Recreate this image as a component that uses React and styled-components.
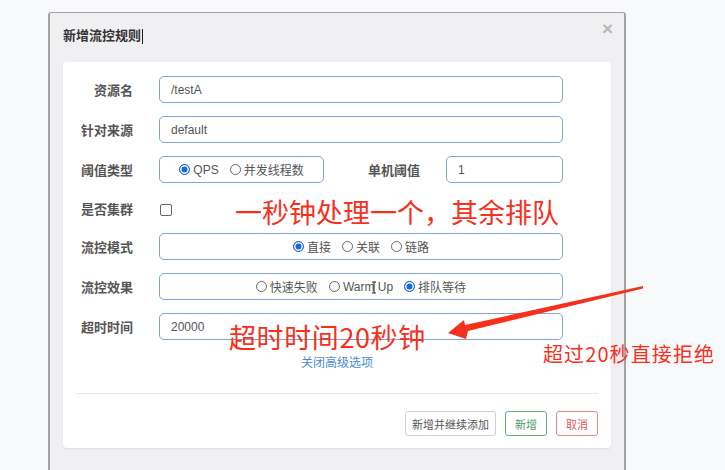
import React from "react";
import styled, { createGlobalStyle } from "styled-components";

const GlobalStyle = createGlobalStyle`
  html, body {
    margin: 0;
    padding: 0;
    background: #f8f9fb;
  }
  body {
    font-family: "Liberation Sans", "Noto Sans CJK SC", sans-serif;
  }
`;

const Page = styled.div`
  position: relative;
  width: 725px;
  height: 470px;
  overflow: hidden;
  padding-top: 12px;
  box-sizing: border-box;
`;

const Modal = styled.div`
  margin-left: 48px;
  width: 578px;
  min-height: 480px;
  box-sizing: border-box;
  background: #f0eff2;
  border: 2px solid #a3a3a3;
  border-top-width: 1px;
  border-bottom: none;
  border-radius: 3px 3px 0 0;
  padding: 0 13px;
`;

const Header = styled.div`
  display: flex;
  justify-content: space-between;
  align-items: flex-start;
  height: 49px;
  box-sizing: border-box;
  padding-top: 14px;
`;

const Title = styled.h4`
  margin: 0;
  display: flex;
  align-items: center;
  font-size: 13px;
  line-height: 18px;
  font-weight: bold;
  color: #333;
`;

const Caret = styled.span`
  display: inline-block;
  width: 1px;
  height: 15px;
  margin-left: 1px;
  background: #222;
`;

const Close = styled.span`
  margin-top: -7px;
  margin-right: -2px;
  font-size: 19px;
  line-height: 18px;
  color: #b8b8b8;
  font-weight: bold;
`;

const Card = styled.div`
  background: #fff;
  border-radius: 4px;
  box-shadow: 0 1px 2px rgba(0, 0, 0, 0.08);
  padding: 14px 13px 12px;
`;

const Form = styled.div`
  display: flex;
  flex-direction: column;
  gap: 13px;
  padding-right: 35px;
`;

const Row = styled.div`
  display: grid;
  grid-template-columns: 57px 1fr;
  column-gap: 26px;
  align-items: center;
  min-height: ${(p) => (p.$short ? "24px" : "27px")};
`;

const Label = styled.label`
  text-align: right;
  font-size: 13px;
  font-weight: bold;
  color: #555;
  white-space: nowrap;
  width: ${(p) => p.$width || "auto"};
  margin-right: ${(p) => p.$gap || "0"};
`;

const Input = styled.div`
  flex: 1;
  height: 27px;
  box-sizing: border-box;
  border: 1px solid #80a4cf;
  border-radius: 5px;
  padding: 0 11px;
  display: flex;
  align-items: center;
  font-size: 12px;
  color: #555;
`;

const Inline = styled.div`
  display: flex;
  align-items: center;
`;

const RadioBox = styled.div`
  width: ${(p) => p.$width || "auto"};
  flex: ${(p) => (p.$width ? "none" : "1")};
  height: 27px;
  box-sizing: border-box;
  border: 1px solid #80a4cf;
  border-radius: 5px;
  display: flex;
  align-items: center;
  justify-content: center;
  gap: 11px;
  font-size: 12px;
  color: #555;
`;

const Option = styled.span`
  display: inline-flex;
  align-items: center;
  gap: 3px;
  white-space: nowrap;
`;

const Dot = styled.span`
  width: 11px;
  height: 11px;
  box-sizing: border-box;
  border-radius: 50%;
  border: 1px solid ${(p) => (p.$on ? "#1668dc" : "#666")};
  background: ${(p) => (p.$on ? "#1668dc" : "#fff")};
  box-shadow: ${(p) => (p.$on ? "inset 0 0 0 1.5px #fff" : "none")};
`;

const Check = styled.span`
  width: 10px;
  height: 10px;
  border: 1px solid #666;
  border-radius: 2px;
  background: #fff;
  margin-left: 1px;
  margin-top: 3px;
`;

const LinkRow = styled.div`
  text-align: center;
  margin-top: 16px;
  font-size: 12px;
  line-height: 14px;
  color: #4c8bd4;
`;

const Divider = styled.div`
  height: 1px;
  background: #e7e7e7;
  margin-top: 23px;
`;

const Footer = styled.div`
  display: flex;
  justify-content: flex-end;
  gap: 9px;
  margin-top: 17px;
`;

const tones = {
  plain: { border: "#d0d0d0", color: "#555" },
  ok: { border: "#6cb07e", color: "#4e9a5f" },
  cancel: { border: "#e28a8a", color: "#d6595b" },
};

const Button = styled.button`
  height: 25px;
  min-width: 42px;
  padding: 0 6px;
  font-family: "Liberation Sans", "Noto Sans CJK SC", sans-serif;
  font-size: 11px;
  background: #fff;
  border: 1px solid ${(p) => tones[p.$tone].border};
  color: ${(p) => tones[p.$tone].color};
  border-radius: 3px;
`;

const Note = styled.div`
  position: absolute;
  left: ${(p) => p.$x}px;
  top: ${(p) => p.$y}px;
  font-family: "Noto Sans CJK SC", sans-serif;
  font-size: ${(p) => p.$size}px;
  letter-spacing: ${(p) => p.$track || 0}px;
  line-height: 1;
  color: #f5301c;
  white-space: nowrap;
`;

const Overlay = styled.svg`
  position: absolute;
  left: 0;
  top: 0;
  pointer-events: none;
`;

const Radios = ({ items, width }) => (
  <RadioBox $width={width}>
    {items.map(([text, on]) => (
      <Option key={text}>
        <Dot $on={on} />
        {text}
      </Option>
    ))}
  </RadioBox>
);

export default function App() {
  return (
    <Page>
      <GlobalStyle />
      <Modal>
        <Header>
          <Title>
            新增流控规则
            <Caret />
          </Title>
          <Close>×</Close>
        </Header>
        <Card>
          <Form>
            <Row>
              <Label>资源名</Label>
              <Input>/testA</Input>
            </Row>
            <Row>
              <Label>针对来源</Label>
              <Input>default</Input>
            </Row>
            <Row>
              <Label>阈值类型</Label>
              <Inline>
                <Radios
                  width="165px"
                  items={[
                    ["QPS", true],
                    ["并发线程数", false],
                  ]}
                />
                <Label $width="96px" $gap="26px">
                  单机阈值
                </Label>
                <Input>1</Input>
              </Inline>
            </Row>
            <Row $short>
              <Label>是否集群</Label>
              <Inline>
                <Check />
              </Inline>
            </Row>
            <Row>
              <Label>流控模式</Label>
              <Radios
                items={[
                  ["直接", true],
                  ["关联", false],
                  ["链路", false],
                ]}
              />
            </Row>
            <Row>
              <Label>流控效果</Label>
              <Radios
                items={[
                  ["快速失败", false],
                  ["Warm Up", false],
                  ["排队等待", true],
                ]}
              />
            </Row>
            <Row>
              <Label>超时时间</Label>
              <Input>20000</Input>
            </Row>
          </Form>
          <LinkRow>关闭高级选项</LinkRow>
          <Divider />
          <Footer>
            <Button $tone="plain">新增并继续添加</Button>
            <Button $tone="ok">新增</Button>
            <Button $tone="cancel">取消</Button>
          </Footer>
        </Card>
      </Modal>

      <Note $x={235} $y={198} $size={27}>
        一秒钟处理一个，其余排队
      </Note>
      <Note $x={229} $y={323} $size={27} $track={0.6}>
        超时时间20秒钟
      </Note>
      <Note $x={543} $y={344} $size={20} $track={1.1}>
        超过20秒直接拒绝
      </Note>

      <Overlay width="725" height="470" viewBox="0 0 725 470">
        <polygon
          points="448,333 464,320 465,325 643,286 643,288.5 468,331 466,339"
          fill="#f5301c"
        />
        <g stroke="#222" strokeWidth="1" fill="none">
          <path d="M372 282 h4 M374 282 v11 M372 293 h4" />
        </g>
      </Overlay>
    </Page>
  );
}
